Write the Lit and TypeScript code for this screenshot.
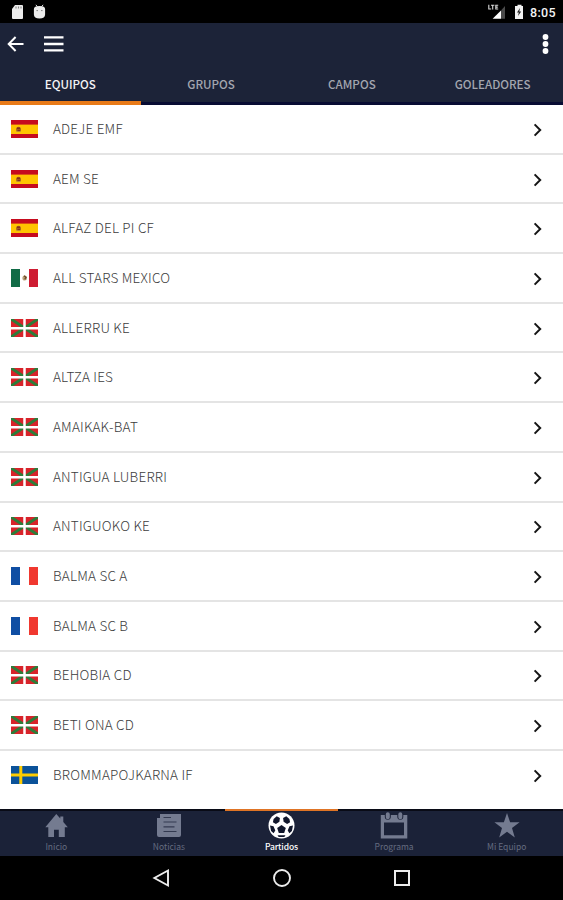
import { LitElement, html, css, svg } from "lit";
import { customElement, property } from "lit/decorators.js";

type Flag = "es" | "mx" | "eu" | "fr" | "se";

const TEAMS: [Flag, string][] = [
  ["es", "ADEJE EMF"],
  ["es", "AEM SE"],
  ["es", "ALFAZ DEL PI CF"],
  ["mx", "ALL STARS MEXICO"],
  ["eu", "ALLERRU KE"],
  ["eu", "ALTZA IES"],
  ["eu", "AMAIKAK-BAT"],
  ["eu", "ANTIGUA LUBERRI"],
  ["eu", "ANTIGUOKO KE"],
  ["fr", "BALMA SC A"],
  ["fr", "BALMA SC B"],
  ["eu", "BEHOBIA CD"],
  ["eu", "BETI ONA CD"],
  ["se", "BROMMAPOJKARNA IF"],
];

const FLAGS = {
  es: svg`<rect width="27" height="18" fill="#c60b1e"/><rect y="4.6" width="27" height="9.4" fill="#ffc400"/>
    <ellipse cx="7.5" cy="9.4" rx="2.5" ry="2.7" fill="#ad6a1c"/><path d="M6 8.2h3M6.5 10.5h2.6" stroke="#843021" stroke-width="1.4"/><path d="M5 11.6h5" stroke="#c99a2e" stroke-width=".8"/>`,
  mx: svg`<rect width="27" height="18" fill="#fff"/><rect width="9" height="18" fill="#116b46"/><rect x="18" width="9" height="18" fill="#ce1c32"/>
    <ellipse cx="13.7" cy="9" rx="2.3" ry="2.6" fill="#b9a27a"/><path d="M13 6.8l2 1.6-1.3 2" stroke="#6d4a2a" stroke-width="1.3" fill="none"/>`,
  eu: svg`<rect width="27" height="18" fill="#d8232a"/><path d="M0 0L27 18M27 0L0 18" stroke="#2c7d3a" stroke-width="2.9"/>
    <path d="M13.5 0V18M0 9.2H27" stroke="#fff" stroke-width="2.5"/>`,
  fr: svg`<rect width="27" height="18" fill="#fff"/><rect width="9" height="18" fill="#0f4ea3"/><rect x="18" width="9" height="18" fill="#f0382f"/>`,
  se: svg`<rect width="27" height="18" fill="#0b5299"/><path d="M9.8 0V18M0 9H27" stroke="#fecc00" stroke-width="3"/>`,
};

@customElement("team-row")
class TeamRow extends LitElement {
  @property() flag: Flag = "es";
  @property() name = "";
  static styles = css`
    :host { display: flex; align-items: center; height: 49.69px; box-sizing: border-box; padding: 0 19px 0 10.6px; border-bottom: 2px solid #e4e4e4; background: #fff; }
    .flag { width: 27px; height: 18px; flex: none; }
    .name { flex: 1; margin-left: 15.3px; padding-bottom: 2px; font-size: 13.5px; line-height: 20px; font-weight: 300; letter-spacing: .22px; color: #3c3c3c; }
    .go { width: 12px; height: 16px; flex: none; margin-top: 2px; }
  `;
  render() {
    return html`<svg class="flag" viewBox="0 0 27 18">${FLAGS[this.flag]}</svg>
      <span class="name">${this.name}</span>
      <svg class="go" viewBox="0 0 12 16"><path d="M2.6 2.4L8.2 8L2.6 13.6" fill="none" stroke="#151515" stroke-width="2"/></svg>`;
  }
}

const NAV = [
  { label: "Inicio", icon: svg`<path d="M14.3 2L3.3 15.3h3V25H12v-7.2h4.8V25h6v-9.7h3L21.3 9.9V4.6h-3v2Z" fill="currentColor"/>` },
  { label: "Noticias", icon: svg`<path d="M5 2H26V23Q26 25 24 25H4Q2 25 2 23V6H5Z" fill="currentColor"/><path d="M8.5 5.5h7.5M8.5 10h13M8.5 14.8h11M8.5 19.5h13" stroke="#333a50" stroke-width="1.2"/>` },
  { label: "Partidos", icon: svg`<circle cx="14.5" cy="13.5" r="13" fill="#fff"/><g fill="#10162b" transform="translate(.5 0)"><path d="M14 9.5l4.3 3.2-1.6 5h-5.4l-1.6-5Z" transform="translate(0 3.4)"/><path d="M9.2 4.2l3.2 1.8-.5 3.7-3.5 2.4-3-1.8.7-3.4ZM18.8 4.2L15.6 6l.5 3.7 3.5 2.4 3-1.8-.7-3.4ZM2.5 13.5l3.5.7 1.8 4.2-1.7 2.9-2.5-2.2ZM25.5 13.5l-3.5.7-1.8 4.2 1.7 2.9 2.5-2.2ZM10 23.2h8l-1.2 1.8h-5.6Z"/></g>` },
  { label: "Programa", icon: svg`<path d="M.8 3H27.3V26.6H.8ZM4 10.4V23.3H24V10.4Z" fill="currentColor" fill-rule="evenodd"/><path d="M7.8 2.7v2M20.3 2.7v2" stroke="#1b2238" stroke-width="6" stroke-linecap="round"/><path d="M7.8 2.2v3M20.3 2.2v3" stroke="currentColor" stroke-width="4" stroke-linecap="round"/>` },
  { label: "Mi Equipo", icon: svg`<path d="M14 1l3.1 9.2h9.5l-7.6 5.9 2.8 9.4L14 19.8l-7.8 5.7L9 16.1 1.4 10.2h9.5Z" fill="currentColor"/>` },
];

@customElement("app-root")
class AppRoot extends LitElement {
  static styles = css`
    :host { display: flex; flex-direction: column; width: 100%; height: 900px; overflow: hidden; background: #fff; font-family: "Noto Sans CJK SC", "Noto Sans", sans-serif; }
    .status { flex: none; height: 23px; background: #000; display: flex; align-items: center; padding: 0 7px 0 11px; color: #f4f4f4; font: 500 12.5px Roboto, sans-serif; }
    .status svg { display: block; }
    .clock { margin-left: 5px; padding-top: 1px; letter-spacing: .35px; }
    .grow { flex: 1; }
    .bar { flex: none; height: 41px; background: #1c2338; display: flex; align-items: center; padding: 0 12px 0 7px; }
    .bar svg { display: block; }
    .burger { margin-left: 19px; }
    .tabs { flex: none; height: 41px; display: grid; grid-template-columns: repeat(4, 1fr); background: #1c2338; }
    .tab { box-sizing: border-box; height: 41px; border-bottom: 3px solid #080c33; text-align: center; font-size: 11.6px; font-weight: 500; line-height: 41px; color: #a3a6af; }
    .tab.on { color: #f3f3f5; border-bottom: 4px solid #e87a18; }
    .list { flex: 1; min-height: 0; overflow: hidden; box-sizing: border-box; }
    .list team-row:last-child { border-color: #fff; }
    .nav { flex: none; height: 47px; display: grid; grid-template-columns: repeat(5, 1fr); background: #1b2238; }
    .item { box-sizing: border-box; border-top: 2px solid #090b16; display: flex; flex-direction: column; align-items: center; color: #747b90; font-size: 8.5px; line-height: 12px; padding-top: 1px; }
    .item svg { width: 28px; height: 28px; flex: none; }
    .item.on { border-color: #df7425; color: #fff; font-weight: 500; }
    .label { color: #656c80; }
    .on .label { color: #fff; letter-spacing: -.1px; }
    .system { flex: none; height: 44px; background: #000; display: flex; justify-content: center; align-items: center; gap: 100px; }
    .system svg { display: block; width: 20px; height: 20px; }
  `;
  render() {
    return html`
      <div class="status">
        <svg width="36" height="16" viewBox="0 0 36 16"><path d="M4 1h7q1 0 1 1v12q0 1-1 1H2q-1 0-1-1V5Z" fill="#ececec"/><path d="M5 2.5v2M7.5 2.5v2M10 2.5v2" stroke="#888" stroke-width="1.1"/><path d="M24.9 .8l1.6 2M32.1 .8l-1.6 2" stroke="#ddd"/><path d="M22.9 5q0-3 5.6-3t5.6 3v5.5q0 4-5.6 4t-5.6-4Z" fill="#ececec"/><path d="M25.5 6.6h1.4M30.1 6.6h1.4" stroke="#777"/></svg>
        <span class="grow"></span>
        <svg width="37" height="16" viewBox="0 0 37 16"><path d="M17 2v12.7h-4V6.4Z" fill="#4b4b4b"/><path d="M13 6.4v8.3H4.6Z" fill="#fff"/><path d="M.8 .8V5h2.4M3 1.3h3.4M4.7 1.3V5.5M10.2 1.3H7.8V5h2.4M7.8 3.1h2" stroke="#d8d8d8" stroke-width="1.1" fill="none"/><path d="M28 2h1.5V.7h4V2H35v13h-8V2Z" fill="#f2f2f2"/><path d="M32 4l-3 4.5h1.8L30 12l3.2-4.5h-1.9Z" fill="#222"/></svg>
        <span class="clock">8:05</span>
      </div>
      <div class="bar">
        <svg width="18" height="18" viewBox="0 0 18 18"><path d="M8.6 2L1.7 9l6.9 7M2 9h14.5" fill="none" stroke="#fff" stroke-width="2"/></svg>
        <svg class="burger" width="20" height="18" viewBox="0 0 20 18"><path d="M0 2.4h19.5M0 9h19.5M0 15.4h19.5" stroke="#fff" stroke-width="2.4"/></svg>
        <span class="grow"></span>
        <svg width="11" height="22" viewBox="0 0 11 22"><g fill="#fff"><circle cx="5.5" cy="4" r="2.9"/><circle cx="5.5" cy="11" r="2.9"/><circle cx="5.5" cy="18" r="2.9"/></g></svg>
      </div>
      <div class="tabs">
        ${["EQUIPOS", "GRUPOS", "CAMPOS", "GOLEADORES"].map((t, i) => html`<div class="tab ${i ? "" : "on"}">${t}</div>`)}
      </div>
      <div class="list">${TEAMS.map(([f, n]) => html`<team-row .flag=${f} .name=${n}></team-row>`)}</div>
      <div class="nav">
        ${NAV.map((n, i) => html`<div class="item ${i === 2 ? "on" : ""}"><svg viewBox="0 0 28 28">${n.icon}</svg><span class="label">${n.label}</span></div>`)}
      </div>
      <div class="system">
        <svg viewBox="0 0 20 20"><path d="M16 2.5v15L2.4 10Z" fill="none" stroke="#ececec" stroke-width="1.9"/></svg>
        <svg viewBox="0 0 20 20"><circle cx="10" cy="10" r="8" fill="none" stroke="#ececec" stroke-width="1.9"/></svg>
        <svg viewBox="0 0 20 20"><rect x="3" y="3" width="14" height="14" fill="none" stroke="#ececec" stroke-width="2"/></svg>
      </div>`;
  }
}
